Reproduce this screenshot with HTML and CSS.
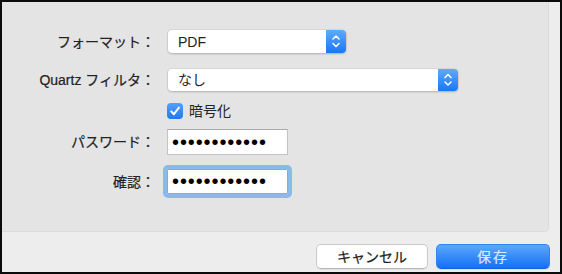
FILE: index.html
```html
<!doctype html>
<html>

<head>
  <title>PDF として保存</title>
  <link rel="stylesheet" href="styles.css">
</head>

<body>
  <div class="sheet">
    <div class="panel">
      <div class="row row-format">
        <div class="label">フォーマット：</div>
        <div class="popup popup-short">
          <span class="popup-text">PDF</span>
          <span class="stepper">
            <svg width="20" height="25" viewBox="0 0 20 25">
              <path d="M7 10 L10 7 L13 10 M7 14.5 L10 17.5 L13 14.5" fill="none" stroke="#fff" stroke-width="1.5" stroke-linecap="round" stroke-linejoin="round"/>
            </svg>
          </span>
        </div>
      </div>
      <div class="row row-filter">
        <div class="label">Quartz フィルタ：</div>
        <div class="popup popup-long">
          <span class="popup-text">なし</span>
          <span class="stepper">
            <svg width="20" height="24" viewBox="0 0 20 24">
              <path d="M7 9.5 L10 6.5 L13 9.5 M7 14 L10 17 L13 14" fill="none" stroke="#fff" stroke-width="1.5" stroke-linecap="round" stroke-linejoin="round"/>
            </svg>
          </span>
        </div>
      </div>
      <div class="row row-check">
        <div class="label"></div>
        <label class="check">
          <span class="check-box">
            <svg width="16" height="16" viewBox="0 0 16 16">
              <path d="M4.2 8.4 L6.9 11.2 L11.9 4.6" fill="none" stroke="#fff" stroke-width="2" stroke-linecap="round" stroke-linejoin="round"/>
            </svg>
          </span>
          <span>暗号化</span>
        </label>
      </div>
      <div class="row row-pass">
        <div class="label">パスワード：</div>
        <input class="field" type="password" value="abcdefghijkl">
      </div>
      <div class="row row-confirm">
        <div class="label">確認：</div>
        <input class="field focused" type="password" value="abcdefghijkl">
      </div>
    </div>
    <div class="buttons">
      <button class="btn">キャンセル</button>
      <button class="btn btn-default">保存</button>
    </div>
  </div>
</body>

</html>
```

FILE: styles.css
```css
html, body {
  margin: 0;
  padding: 0;
}
body {
  font-family: "Liberation Sans", "Noto Sans CJK JP", sans-serif;
  font-size: 14px;
  color: #222;
}
.sheet {
  width: 562px;
  height: 274px;
  box-sizing: border-box;
  border: 2px solid #0b0b0b;
  background: #ededed;
  display: flex;
  flex-direction: column;
}
.panel {
  height: 230px;
  margin-right: 11px;
  box-sizing: border-box;
  background: #e4e4e4;
  border-right: 1px solid #dadada;
  border-bottom: 1px solid #dadada;
  border-bottom-right-radius: 5px;
  padding-top: 27px;
  display: flex;
  flex-direction: column;
}
.row {
  display: flex;
  align-items: center;
  gap: 12px;
}
.row-format { height: 25px; }
.row-filter { height: 24px; margin-top: 14px; }
.row-check { height: 16px; margin-top: 11px; }
.row-pass { height: 26px; margin-top: 10px; }
.row-confirm { height: 25px; margin-top: 14px; }
.label {
  width: 153px;
  text-align: right;
  line-height: 16px;
  white-space: nowrap;
  -webkit-text-stroke: 0.2px #222;
}
.popup {
  height: 100%;
  box-sizing: border-box;
  display: flex;
  align-items: center;
  background: #fff;
  border: 1px solid #cdcdcd;
  border-top-color: #d6d6d6;
  border-bottom-color: #bdbdbd;
  border-radius: 5px;
  box-shadow: 0 1px 1px rgba(0, 0, 0, 0.08);
  overflow: hidden;
}
.popup-short { width: 180px; }
.popup-long { width: 292px; }
.popup-text {
  flex: 1;
  padding-left: 10px;
  line-height: 16px;
}
.stepper {
  width: 20px;
  height: 100%;
  display: flex;
  align-items: center;
  justify-content: center;
  background: linear-gradient(#5eabfd, #1a76f6);
}
.check {
  display: flex;
  align-items: center;
  gap: 6px;
  line-height: 16px;
}
.check-box {
  width: 16px;
  height: 16px;
  border-radius: 4px;
  background: linear-gradient(#4fa2fc, #1f79f4);
  display: flex;
}
.field {
  width: 121px;
  height: 100%;
  box-sizing: border-box;
  margin: 0;
  padding: 0 0 0 4px;
  border: 1px solid #c3c3c3;
  border-top-color: #ababab;
  border-radius: 0;
  background: #fff;
  font-family: "Liberation Sans", sans-serif;
  font-size: 20px;
  letter-spacing: 0.9px;
  color: #000;
  outline: none;
}
.field.focused {
  outline: 4px solid #8ab9ee;
  outline-offset: 0;
  border-color: #7aaeea;
  border-radius: 1px;
}
.buttons {
  flex: 1;
  display: flex;
  justify-content: flex-end;
  align-items: flex-start;
  gap: 8px;
  padding: 12px 10px 0 0;
}
.btn {
  height: 25px;
  width: 112px;
  box-sizing: border-box;
  margin: 0;
  font-family: "Liberation Sans", "Noto Sans CJK JP", sans-serif;
  font-size: 14px;
  line-height: 16px;
  color: #222;
  background: #fff;
  border: 1px solid #c9c9c9;
  border-bottom-color: #b5b5b5;
  border-radius: 5px;
  box-shadow: 0 1px 1px rgba(0, 0, 0, 0.06);
  -webkit-text-stroke: 0.2px currentColor;
}
.btn-default {
  width: 114px;
  color: #dce9fd;
  background: linear-gradient(#5aa8fd, #1670f4);
  border-color: #2f86f7;
  border-bottom-color: #1462e0;
  letter-spacing: 2px;
}
```
